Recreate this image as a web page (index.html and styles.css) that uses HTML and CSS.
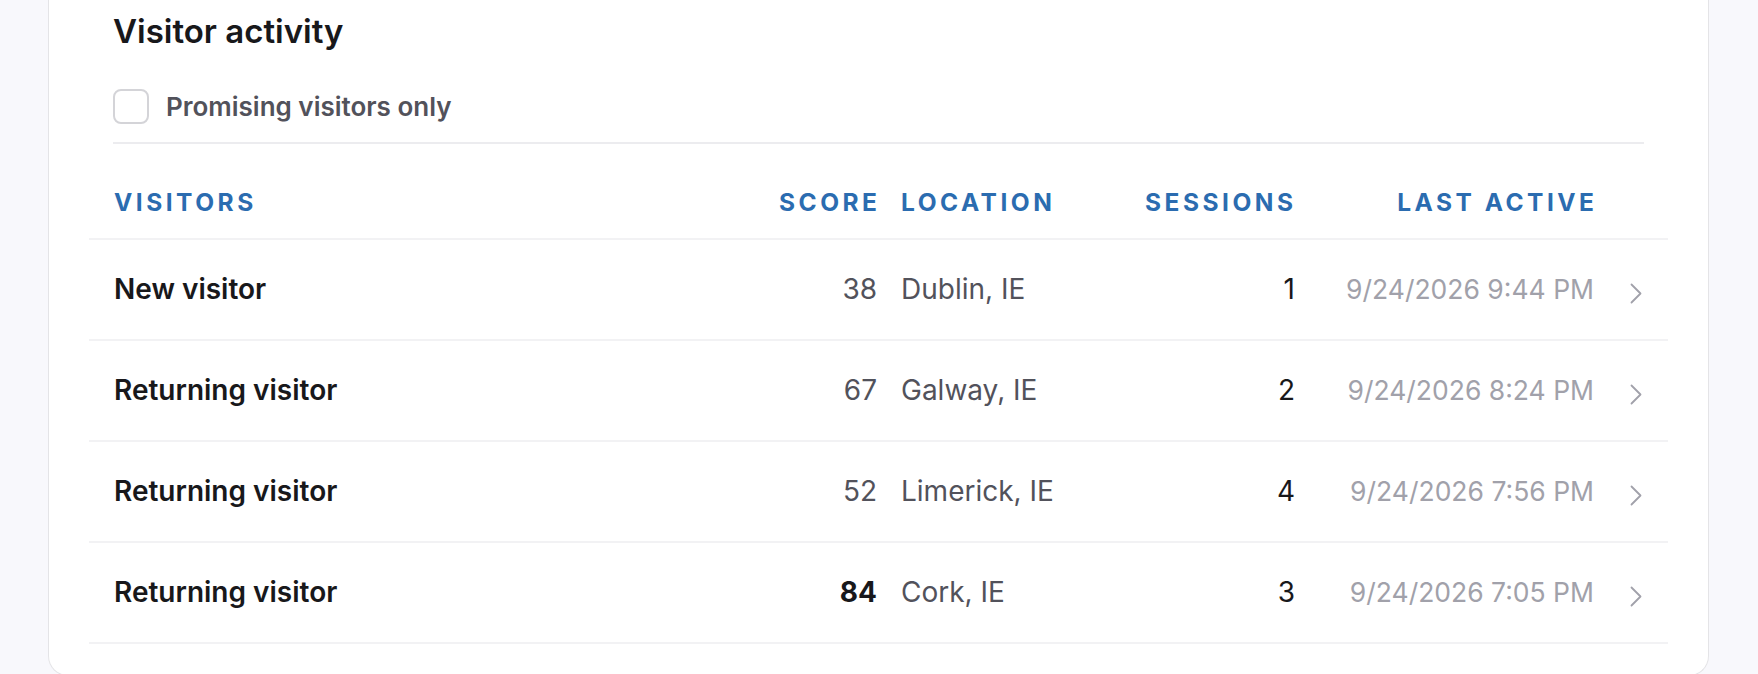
FILE: index.html
```html
<!DOCTYPE html>
<html lang="en">
<head>
<meta charset="utf-8">
<title>Visitor activity</title>
<link rel="stylesheet" href="styles.css">
</head>
<body>
<main class="card">
  <header class="card-head">
    <h2 class="title">Visitor activity</h2>
    <label class="filter">
      <span class="checkbox"></span>
      <span class="filter-label">Promising visitors only</span>
    </label>
  </header>
  <table class="visitors">
    <colgroup>
      <col class="c-name"><col class="c-score"><col class="c-loc"><col class="c-sess"><col class="c-last"><col class="c-go">
    </colgroup>
    <thead>
      <tr>
        <th class="th-name">Visitors</th>
        <th class="num">Score</th>
        <th class="left">Location</th>
        <th class="num">Sessions</th>
        <th class="num">Last active</th>
        <th></th>
      </tr>
    </thead>
    <tbody>
      <tr>
        <td class="name">New visitor</td>
        <td class="score">38</td>
        <td class="loc">Dublin, IE</td>
        <td class="sess">1</td>
        <td class="last">9/24/2026 9:44 PM</td>
        <td class="go"><svg class="chev" width="12" height="21" viewBox="0 0 12 21"><polyline points="1.5,1.5 10.5,10.5 1.5,19.5" fill="none" stroke="#a1a1aa" stroke-width="1.8" stroke-linecap="round" stroke-linejoin="round"/></svg></td>
      </tr>
      <tr>
        <td class="name">Returning visitor</td>
        <td class="score">67</td>
        <td class="loc">Galway, IE</td>
        <td class="sess">2</td>
        <td class="last">9/24/2026 8:24 PM</td>
        <td class="go"><svg class="chev" width="12" height="21" viewBox="0 0 12 21"><polyline points="1.5,1.5 10.5,10.5 1.5,19.5" fill="none" stroke="#a1a1aa" stroke-width="1.8" stroke-linecap="round" stroke-linejoin="round"/></svg></td>
      </tr>
      <tr>
        <td class="name">Returning visitor</td>
        <td class="score">52</td>
        <td class="loc">Limerick, IE</td>
        <td class="sess">4</td>
        <td class="last">9/24/2026 7:56 PM</td>
        <td class="go"><svg class="chev" width="12" height="21" viewBox="0 0 12 21"><polyline points="1.5,1.5 10.5,10.5 1.5,19.5" fill="none" stroke="#a1a1aa" stroke-width="1.8" stroke-linecap="round" stroke-linejoin="round"/></svg></td>
      </tr>
      <tr>
        <td class="name">Returning visitor</td>
        <td class="score strong">84</td>
        <td class="loc">Cork, IE</td>
        <td class="sess">3</td>
        <td class="last">9/24/2026 7:05 PM</td>
        <td class="go"><svg class="chev" width="12" height="21" viewBox="0 0 12 21"><polyline points="1.5,1.5 10.5,10.5 1.5,19.5" fill="none" stroke="#a1a1aa" stroke-width="1.8" stroke-linecap="round" stroke-linejoin="round"/></svg></td>
      </tr>
    </tbody>
  </table>
</main>
</body>
</html>
```

FILE: styles.css
```css
* { box-sizing: border-box; }

html, body {
  margin: 0;
  padding: 0;
  background: #f8f8fc;
  font-family: Inter, "Noto Sans", sans-serif;
  color: #18181b;
}

body {
  height: 674px;
  overflow: hidden;
}

.card {
  margin: 0 49px 0 48px;
  background: #ffffff;
  border: 1px solid #e4e4e7;
  border-top: none;
  border-radius: 0 0 20px 20px;
  padding: 0 40px 31px 40px;
}

.card-head {
  padding: 11px 24px 0 24px;
}

.title {
  margin: 0;
  font-size: 33px;
  line-height: 40px;
  font-weight: 600;
  color: #18181b;
}

.filter {
  margin-top: 38px;
  display: flex;
  align-items: center;
  gap: 17px;
  padding-bottom: 18px;
  border-bottom: 2px solid #ececef;
}

.checkbox {
  width: 36px;
  height: 35px;
  border: 2px solid #d4d4d8;
  border-radius: 8px;
  background: #fff;
  flex: none;
}

.filter-label {
  font-size: 26px;
  line-height: 35px;
  font-weight: 600;
  color: #52525b;
}

.visitors {
  width: 100%;
  margin-top: 22px;
  table-layout: fixed;
  border-collapse: separate;
  border-spacing: 0;
}

.c-score { width: 130px; }
.c-loc { width: 241px; }
.c-sess { width: 175px; }
.c-last { width: 301px; }
.c-go { width: 62px; }

th {
  font-size: 24.5px;
  line-height: 32px;
  font-weight: 700;
  letter-spacing: 3.5px;
  text-transform: uppercase;
  color: #2b6cb0;
  padding: 20px 12px;
  border-bottom: 2px solid #f2f2f4;
  text-align: left;
  white-space: nowrap;
}

th.th-name { padding-left: 25px; }
th.num { text-align: right; padding-right: 8.5px; }

td {
  font-size: 28px;
  line-height: 35px;
  padding: 32px 12px;
  border-bottom: 2px solid #f2f2f4;
  white-space: nowrap;
}

td.name {
  padding-left: 25px;
  font-weight: 600;
  color: #18181b;
}

td.score {
  text-align: right;
  color: #52525b;
}

td.score.strong {
  font-weight: 700;
  color: #18181b;
}

td.loc { color: #52525b; }

td.sess {
  text-align: right;
  padding-right: 10px;
  color: #18181b;
}

td.last {
  text-align: right;
  font-size: 26.5px;
  color: #a1a1aa;
}

td.go {
  padding-left: 24px;
  padding-right: 0;
}

.chev {
  display: block;
  margin-top: 8px;
}
```
